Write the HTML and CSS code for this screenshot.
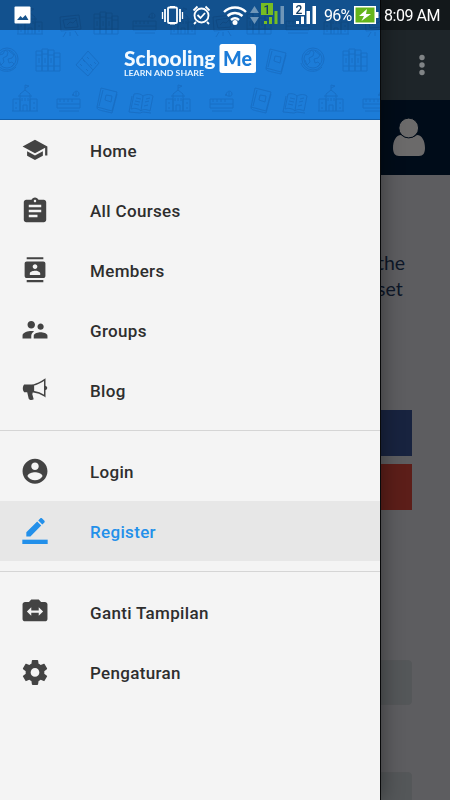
FILE: index.html
```html
<!DOCTYPE html>
<html lang="id">
<head>
<meta charset="utf-8">
<title>SchoolingMe</title>
<link rel="stylesheet" href="styles.css">
</head>
<body>
<div class="screen">
  <main class="page">
    <div class="toolbar">
      <svg class="more" viewBox="0 0 8 24"><circle cx="4" cy="4.500" r="2.700"/><circle cx="4" cy="12" r="2.700"/><circle cx="4" cy="19.500" r="2.700"/></svg>
    </div>
    <div class="userbar">
      <svg class="avatar" viewBox="0 0 32 38"><path d="M8 17C3 17 0 23 0 30c0 5 2 8 6 8h20c4 0 6-3 6-8 0-7-3-13-8-13-5 4-11 4-16 0z"/><circle class="head" cx="15.700" cy="10" r="9.900"/></svg>
    </div>
    <div class="content">
      <p class="intro">the<br>set</p>
      <div class="social facebook"></div>
      <div class="social google"></div>
      <div class="field"></div>
      <div class="field second"></div>
    </div>
  </main>

  <aside class="drawer">
    <header class="brand">
      <svg width="380" height="120" viewBox="0 0 380 120">
        <defs>
          <g id="school"><path d="M-13 11h26M-12 11V-1h7v12M5 11V-1h7v12M-5 11V-6L0-10l5 4V11M0-10v-5l4 1-4 2M-2 11V5h4v6M-9 2v2m0 3v2M9 2v2m0 3v2M-3-2v3m3-3v3m3-3v3M-7-4h14"/></g>
          <g id="ruler"><path d="M-12-1h23V8h-23zM-12 4h23M-9-1v3m4-3v3m4-3v3m4-3v3M-10 11h20M4-4c0-6 6-6 6-2 0 3-5 3-6 0zM7-8v4"/></g>
          <g id="note"><path d="M-6-12L10-8 5 11-10 7zM-4-10L-8 6M-1-5l6 1-1 6-6-2zM-10 7c0 3 2 3 15 6l5-19"/></g>
          <g id="book"><path d="M-9-8c4-1 7 0 9 2 4-2 7-2 10 0L7 9c-4-2-7-2-9 0-3-3-7-3-10-2zM0-6l-2 15M-7-4l5 1m-6 2l5 1m-6 2l5 1M3-3l4-1M2 0l4-1M1 4l4-1M-11-6l-3 16 11 1 3-1 8 1"/></g>
          <g id="globe"><circle r="11"/><circle r="9"/><path d="M-8-4l4-1 2-4 3 2-1 4-4 2 1 4-3 3-2-5M2-8l5 4-2 3-4 1 1 4 3-1 2 2-3 3M-12 4c2 8 14 12 21 4"/></g>
          <g id="books"><path d="M-12-9h6v20h-6zM-6-11h6v22h-6zM0-10h6v21H0zM6-7h6v18H6zM-12-5h6m-6 11h6M-6-6h6m-6 12h6M0-5h6M0 6h6M6-3h6M6 6h6M-9-2v5M-3-2v5M3-2v5"/></g>
          <g id="ticket"><path d="M0-12L11 0 0 13-12 2zM-6-5l11 12M-8 1l2 2m1-6l2 2m2-5l2 2M-2 6l2 2m2-7l2 2m2-4l2 2"/></g>
          <g id="board"><path d="M-10-8L9-10l2 14-20 2zM-7-5L6-7l2 9-13 1zM-4 7l-3 5M5 6l3 5M0 7v4M-3 0l3-3 3 1 3-3"/></g>
        </defs>
        <g class="pattern">
          <use href="#school" x="30" y="23"/><use href="#board" x="70" y="25"/><use href="#books" x="106" y="23"/><use href="#ruler" x="145" y="22"/>
          <use href="#school" x="183" y="23"/><use href="#board" x="223" y="25"/><use href="#books" x="259" y="23"/><use href="#ruler" x="298" y="22"/><use href="#school" x="336" y="23"/><use href="#board" x="375" y="25"/>
          <use href="#globe" x="7" y="59"/><use href="#books" x="48" y="60"/><use href="#ticket" x="88" y="63"/>
          <use href="#note" x="276" y="61"/><use href="#globe" x="313" y="59"/><use href="#books" x="355" y="60"/>
          <use href="#school" x="25" y="100"/><use href="#ruler" x="69" y="100"/><use href="#note" x="107" y="100"/><use href="#book" x="143" y="102"/>
          <use href="#school" x="178" y="100"/><use href="#ruler" x="222" y="100"/><use href="#note" x="261" y="100"/><use href="#book" x="297" y="102"/><use href="#school" x="331" y="100"/><use href="#ruler" x="375" y="100"/>
        </g>
        <text class="logo-main" x="124" y="65.500" textLength="91.500" lengthAdjust="spacingAndGlyphs">Schooling</text>
        <rect class="logo-box" x="219.500" y="44" width="36.500" height="29" rx="2.500"/>
        <text class="logo-me" x="223" y="65.500" textLength="29" lengthAdjust="spacingAndGlyphs">Me</text>
        <text class="tagline" x="124" y="76.300" textLength="80" lengthAdjust="spacingAndGlyphs">LEARN AND SHARE</text>
      </svg>
    </header>
    <nav>
      <ul class="menu">
        <li><svg viewBox="0 0 24 24"><path d="M5 13.180v4L12 21l7-3.820v-4L12 17l-7-3.820zM12 3L1 9l11 6 9-4.910V17h2V9L12 3z" transform="translate(-.5 -.5) scale(1.040)"/></svg><span>Home</span></li>
        <li><svg viewBox="0 0 24 24"><path d="M19 3h-4.180C14.400 1.840 13.300 1 12 1c-1.300 0-2.400.84-2.820 2H5c-1.100 0-2 .9-2 2v14c0 1.100.9 2 2 2h14c1.100 0 2-.9 2-2V5c0-1.100-.9-2-2-2zm-7 0c.55 0 1 .45 1 1s-.45 1-1 1-1-.45-1-1 .45-1 1-1zm2 14H7v-2h7v2zm3-4H7v-2h10v2zm0-4H7V7h10v2z" transform="translate(-1.800 -.8) scale(1.150)"/></svg><span>All Courses</span></li>
        <li><svg viewBox="0 0 24 24"><path d="M20 0H4v2h16V0zM4 24h16v-2H4v2zM20 4H4c-1.100 0-2 .9-2 2v12c0 1.100.9 2 2 2h16c1.100 0 2-.9 2-2V6c0-1.100-.9-2-2-2zm-8 2.750c1.240 0 2.250 1.010 2.250 2.250s-1.010 2.250-2.250 2.250S9.750 10.240 9.750 9 10.760 6.750 12 6.750zM17 17H7v-1.500c0-1.670 3.330-2.500 5-2.500s5 .83 5 2.500V17z" transform="translate(.5 .2) scale(.96)"/></svg><span>Members</span></li>
        <li><svg viewBox="0 0 24 24"><path d="M16.500 12c1.380 0 2.490-1.120 2.490-2.500S17.880 7 16.500 7C15.120 7 14 8.120 14 9.500s1.120 2.500 2.500 2.500zM9 11c1.660 0 2.990-1.340 2.990-3S10.660 5 9 5C7.340 5 6 6.340 6 8s1.340 3 3 3zm7.500 3c-1.830 0-5.500.92-5.500 2.750V19h11v-2.250c0-1.830-3.670-2.750-5.500-2.750zM9 13c-2.330 0-7 1.170-7 3.500V19h7v-2.250c0-.85.330-2.340 2.370-3.470C10.500 13.100 9.660 13 9 13z" transform="translate(-1.800 -2) scale(1.150)"/></svg><span>Groups</span></li>
        <li><svg viewBox="0 0 24 24"><path d="M2 7h8.500v7H10l-.5 2 1.300 4.500C9.500 21.500 7 21.500 6.200 20L4.800 14H2c-1.600-1.500-1.600-5.500 0-7z"/><path class="line" d="M10.500 7.500C15 6.500 18 4.500 21 2.500v15c-3-2-6-3.500-10.500-4z"/><path d="M21 8c3 0 3 4 0 4z"/></svg><span>Blog</span></li>
      </ul>
      <ul class="menu">
        <li><svg viewBox="0 0 24 24"><path d="M12 2C6.480 2 2 6.480 2 12s4.480 10 10 10 10-4.480 10-10S17.520 2 12 2zm0 3c1.660 0 3 1.340 3 3s-1.340 3-3 3-3-1.340-3-3 1.340-3 3-3zm0 14.200c-2.500 0-4.710-1.280-6-3.220.03-1.990 4-3.080 6-3.080 1.990 0 5.970 1.090 6 3.080-1.290 1.940-3.500 3.220-6 3.220z" transform="translate(-1.800 -1.600) scale(1.150)"/></svg><span>Login</span></li>
        <li class="active"><svg viewBox="0 0 24 24"><path d="M17.750 7L14 3.250l-10 10V17h3.750l10-10zm2.960-2.960c.39-.39.39-1.020 0-1.410L18.370.29c-.39-.39-1.020-.39-1.410 0L15 2.250 18.750 6l1.960-1.960z"/><path d="M.3 20h23.400v4H.3z"/></svg><span>Register</span></li>
      </ul>
      <ul class="menu">
        <li><svg viewBox="0 0 24 24"><path d="M20 4h-3.170L15 2H9L7.170 4H4c-1.100 0-2 .9-2 2v12c0 1.100.9 2 2 2h16c1.100 0 2-.9 2-2V6c0-1.100-.9-2-2-2zm-5 11.500V13H9v2.500L5.500 12 9 8.500V11h6V8.500l3.500 3.500-3.500 3.500z" transform="translate(-1.800 -1.800) scale(1.150 1.120)"/></svg><span>Ganti Tampilan</span></li>
        <li><svg viewBox="0 0 24 24"><path d="M19.430 12.980c.04-.32.070-.64.070-.98s-.03-.66-.07-.98l2.110-1.650c.19-.15.240-.42.120-.64l-2-3.460c-.12-.22-.39-.3-.61-.22l-2.490 1c-.52-.4-1.080-.73-1.690-.98l-.38-2.650C14.460 2.180 14.250 2 14 2h-4c-.25 0-.46.180-.49.420l-.38 2.650c-.61.250-1.170.590-1.690.980l-2.490-1c-.23-.09-.49 0-.61.220l-2 3.460c-.13.220-.07.490.12.640l2.110 1.650c-.04.320-.07.650-.07.980s.03.660.07.980l-2.110 1.650c-.19.150-.24.420-.12.640l2 3.460c.12.220.39.300.61.220l2.490-1c.52.400 1.080.730 1.690.980l.38 2.650c.03.240.24.420.49.420h4c.25 0 .46-.18.490-.42l.38-2.650c.61-.25 1.170-.59 1.690-.98l2.490 1c.23.090.49 0 .61-.22l2-3.460c.12-.22.070-.49-.12-.64l-2.110-1.650zM12 15.500c-1.930 0-3.500-1.570-3.500-3.500s1.570-3.500 3.500-3.500 3.500 1.570 3.500 3.500-1.570 3.500-3.500 3.500z" transform="translate(-1.800 -1.400) scale(1.150)"/></svg><span>Pengaturan</span></li>
      </ul>
    </nav>
  </aside>

  <div class="statusbar">
    <svg width="322" height="30" viewBox="0 0 322 30">
      <rect class="w" x="14.500" y="6.500" width="16" height="17" rx="1"/>
      <path class="mountain" d="M17 20l3.500-4 2 2L25.500 15l3 5z"/>
      <g class="stroke">
        <rect x="168" y="7.500" width="9" height="15.500" rx="1"/>
        <path d="M170 7h5M170 23.500h5M165 9v13M180 9v13"/><path class="thin" d="M162.500 12v7M182.500 12v7"/>
        <circle cx="201.500" cy="15.500" r="7"/><path d="M197.500 15l3 3 4.500-5M193.500 10.500l4-4M209.500 10.500l-4-4M196 22l-2 2M207 22l2 2"/>
        <path class="wifi" d="M224 12c6-6 16-6 22 0M227.500 16c4.500-4 10.500-4 15 0M231 20c2.500-2.300 5.500-2.300 8 0"/>
      </g>
      <circle class="w" cx="235" cy="22.500" r="2.500"/>
      <path class="dim" d="M250 13l4.500-7 4.500 7zM250 17h9l-4.500 7z"/>
      <path class="green" d="M261 3h12v12h-12zM264 21h3v3h-3zM269 17h3v7h-3zM274.500 11h3v13h-3z"/>
      <path class="dim" d="M280.500 6h3.500v18h-3.500z"/>
      <text class="sim" x="263.500" y="13.500">1</text>
      <path class="w" d="M293 3h12v12h-12zM296 21h3v3h-3zM301 16.500h3v7.500h-3zM306.500 11h3.500v13h-3.500zM312.500 6h3.500v18h-3.500z"/>
      <text class="sim" x="295.500" y="13.500">2</text>
    </svg>
    <span class="percent">96%</span>
    <svg class="battery" width="25" height="18" viewBox="0 0 25 18"><path class="w" d="M22 6h2.500v6H22z"/><rect class="cell" x=".75" y=".75" width="20.500" height="16.500"/><path class="w" d="M13 3L5 10h5l-2.500 5L17 8h-5z"/></svg>
    <span class="clock">8:09 AM</span>
  </div>
</div>
</body>
</html>
```

FILE: styles.css
```css
* { box-sizing: border-box; }
body { margin: 0; font-family: Roboto, sans-serif; }
ul, p { margin: 0; padding: 0; list-style: none; }
svg { display: block; flex: none; }

.screen { position: relative; width: 450px; height: 800px; overflow: hidden; background: #5d5d60; }

.toolbar { height: 100px; padding: 53px 24px 0 0; background: #1e2529; display: flex; justify-content: flex-end; }
.more { width: 8px; height: 24px; fill: #808486; }
.userbar { height: 75px; padding: 18px 25px 0 0; background: #000c19; display: flex; justify-content: flex-end; }
.avatar { width: 32px; height: 38px; fill: #6b6a6a; overflow: visible; }
.avatar .head { stroke: #000c19; stroke-width: 1; }
.content { padding: 75px 38px 0 0; }
.intro { height: 160px; padding-left: 377px; font: 19.5px/26px Lato, sans-serif; color: #0d1728; }
.social { height: 46px; margin-bottom: 8px; }
.facebook { background: #18233f; }
.google { background: #5c1e19; }
.field { height: 45px; margin-top: 150px; border: 1px solid #555759; border-radius: 4px; background: #545759; }
.field.second { margin-top: 67px; }

.drawer { position: absolute; inset: 0 auto 0 0; width: 380px; background: #f4f4f4; box-shadow: 1px 0 0 #08090a, 2px 0 20px rgba(0, 0, 0, .4); }
.brand { height: 120px; background: #1c7cd8; border-bottom: 1px solid #1260ad; overflow: hidden; }
.pattern { fill: none; stroke: #1767b8; stroke-width: .9; opacity: .65; }
.logo-main, .logo-me { font: 900 21.500px Lato, sans-serif; fill: #f3faff; }
.logo-main { font-size: 21px; }
.logo-me { fill: #1c7cd8; }
.logo-box { fill: #fff; }
.tagline { font: 700 8.300px Lato, sans-serif; fill: #e5f3ff; }

.menu + .menu { margin-top: 10px; padding-top: 10px; border-top: 1px solid #d5d5d5; }
.menu li { display: flex; align-items: center; gap: 42px; height: 60px; padding-left: 22px; font-size: 17px; font-weight: 500; letter-spacing: .33px; color: #2e2e2e; }
.menu span { padding-top: 2px; }
.menu svg { width: 26px; height: 26px; fill: #434343; overflow: visible; }
.menu .line { fill: none; stroke: #434343; stroke-width: 1.4; }
.menu .active { background: #e7e7e7; color: #2390ea; }
.menu .active svg { fill: #2390ea; }

.statusbar { position: absolute; inset: 0 0 auto 0; height: 30px; display: flex; align-items: center; background: rgba(0, 0, 0, .34); color: #fff; font-size: 16px; line-height: 30px; white-space: nowrap; }
.w { fill: #fff; }
.mountain { fill: #17548c; }
.stroke { fill: none; stroke: #fff; stroke-width: 1.8; }
.thin { stroke-width: 1.3; }
.wifi { stroke-width: 2.4; }
.dim { fill: #6f96b8; }
.green { fill: #76bd22; }
.sim { font: 500 12px Roboto, sans-serif; fill: #123c63; }
.percent { width: 32px; padding: 2px 0 0 2px; letter-spacing: -.8px; }
.cell { fill: #65b51c; stroke: #fff; stroke-width: 1.5; }
.clock { margin-left: 5px; padding-top: 2px; letter-spacing: -.45px; }
```
